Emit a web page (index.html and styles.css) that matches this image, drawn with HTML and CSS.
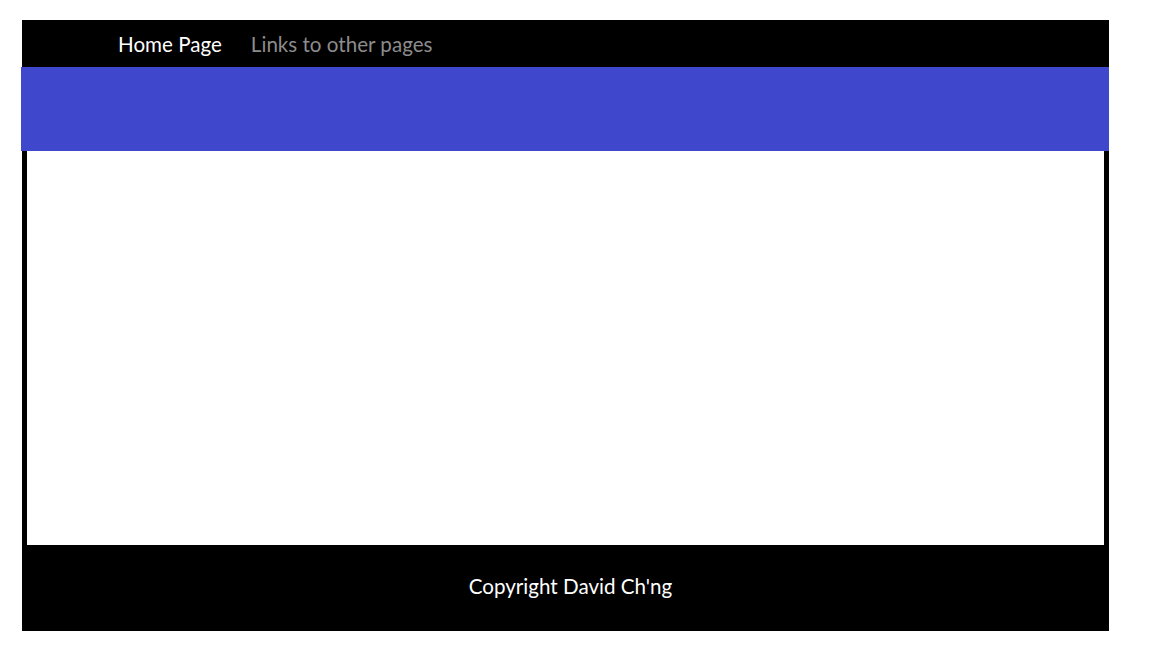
FILE: index.html
```html
<!DOCTYPE html>
<html>
<head>
<meta charset="utf-8">
<link rel="stylesheet" href="styles.css">
</head>
<body>
<div class="page">
  <nav class="nav">
    <a class="nav-link nav-home" href="#">Home Page</a>
    <a class="nav-link nav-other" href="#">Links to other pages</a>
  </nav>
  <div class="banner"></div>
  <main class="content"></main>
  <footer class="footer">Copyright David Ch'ng</footer>
</div>
</body>
</html>
```

FILE: styles.css
```css
html, body {
  margin: 0;
  padding: 0;
  background: #ffffff;
}
body {
  padding: 20px 0 0 21px;
  font-family: Lato, "Open Sans", sans-serif;
}
.page {
  width: 1088px;
  display: flex;
  flex-direction: column;
}
.nav {
  margin-left: 1px;
  height: 47px;
  background: #000000;
  display: flex;
  align-items: center;
  padding-left: 96px;
  gap: 29px;
}
.nav-link {
  font-size: 20.6px;
  text-decoration: none;
  line-height: 1;
  padding-top: 1px;
}
.nav-home {
  color: #ffffff;
}
.nav-other {
  color: #8c8c8c;
}
.banner {
  height: 84px;
  background: #3f48cc;
}
.content {
  margin-left: 1px;
  height: 394px;
  background: #ffffff;
  border-left: 5px solid #000000;
  border-right: 5px solid #000000;
}
.footer {
  margin-left: 1px;
  height: 86px;
  background: #000000;
  color: #ffffff;
  font-size: 20.6px;
  line-height: 1;
  display: flex;
  align-items: center;
  justify-content: center;
  padding-left: 10px;
  padding-bottom: 4px;
  box-sizing: border-box;
}
```
